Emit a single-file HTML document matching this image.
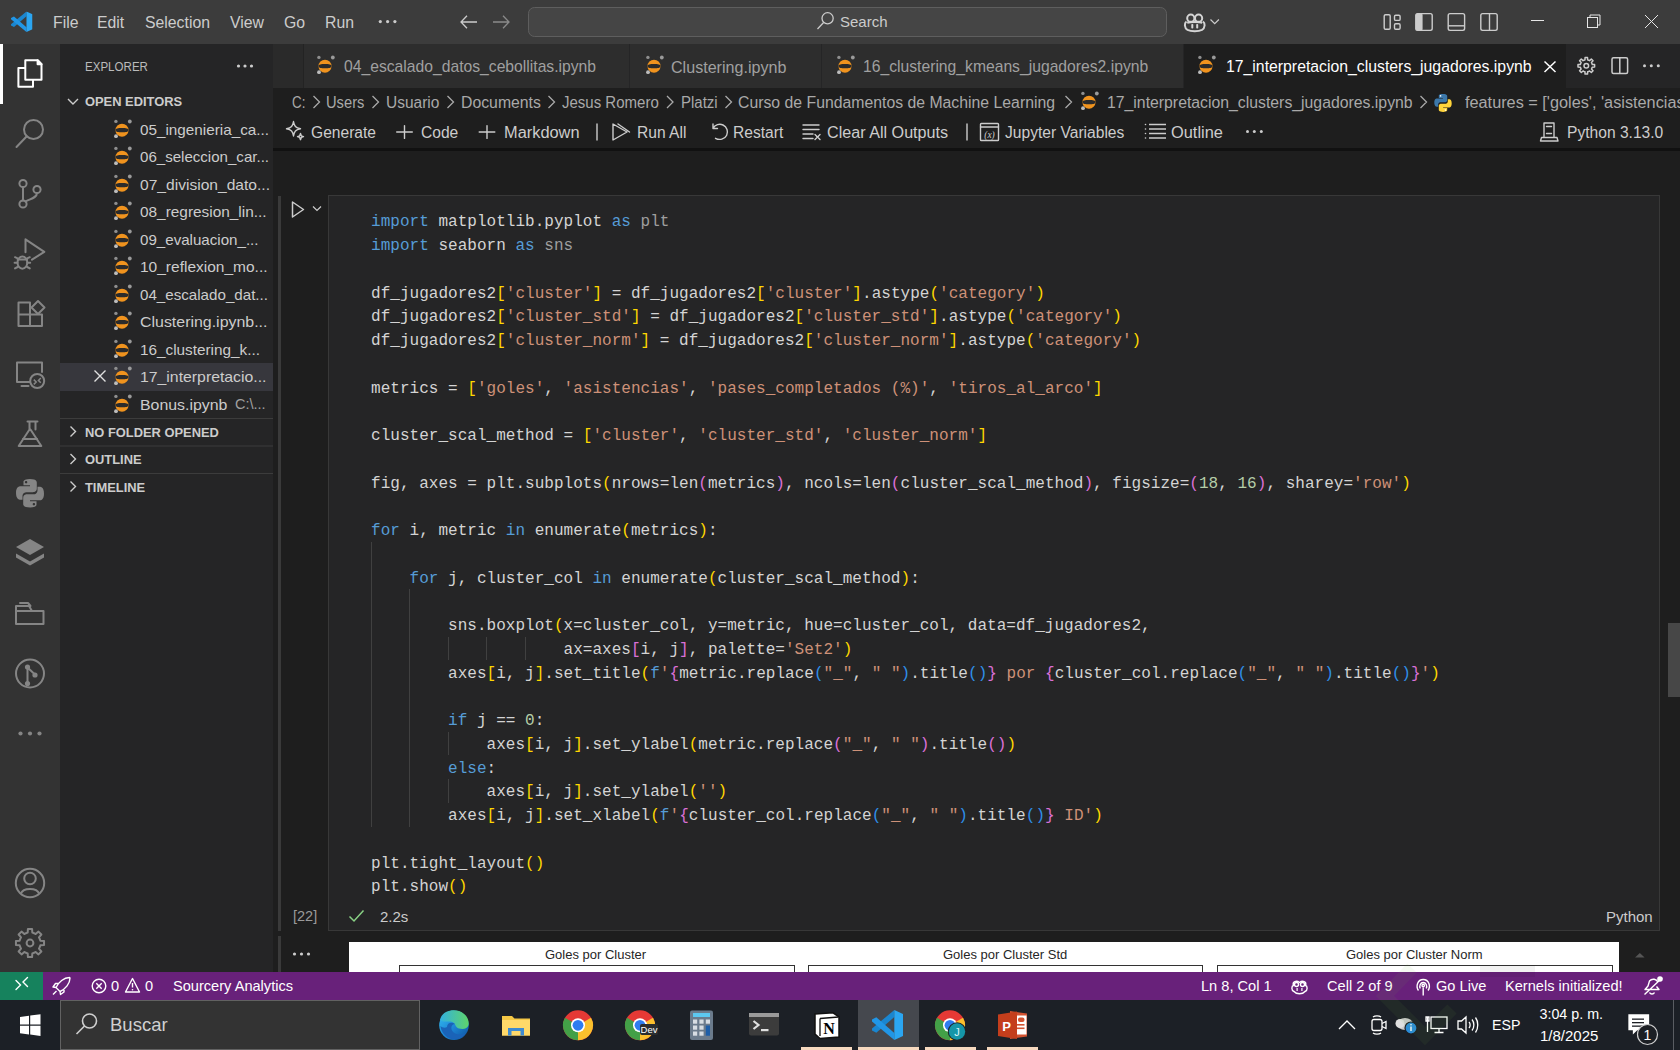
<!DOCTYPE html>
<html><head><meta charset="utf-8">
<style>
*{box-sizing:border-box;margin:0;padding:0}
html,body{width:1680px;height:1050px;overflow:hidden;background:#1e1e1e;font-family:"Liberation Sans",sans-serif;color:#ccc}
.a{position:absolute;white-space:pre}
#title{position:absolute;left:0;top:0;width:1680px;height:44px;background:#3c3c3c}
#act{position:absolute;left:0;top:44px;width:60px;height:928px;background:#333333}
#side{position:absolute;left:60px;top:44px;width:213px;height:928px;background:#252526}
#tabs{position:absolute;left:273px;top:44px;width:1407px;height:44px;background:#252526}
#crumb{position:absolute;left:273px;top:88px;width:1407px;height:28px;background:#1e1e1e}
#tool{position:absolute;left:273px;top:116px;width:1407px;height:32px;background:#1e1e1e}
#editor{position:absolute;left:273px;top:148px;width:1407px;height:824px;background:#1e1e1e}
#status{position:absolute;left:0;top:972px;width:1680px;height:28px;background:#68217a}
#task{position:absolute;left:0;top:1000px;width:1680px;height:50px;background:#1c2026}
.g{position:absolute;width:1px;background:#404040}
.ln{height:23.75px;white-space:pre}
.mt{top:14px;font-size:15.8px;color:#cccccc}
.sh{left:85px;font-weight:bold;font-size:12.9px;color:#cccccc}
.si{left:140px;font-size:15px;line-height:27.5px;color:#cccccc}
.tt{top:58px;font-size:15.7px;color:#a0a0a0}
.cb{top:94px;font-size:15.8px;color:#a9a9a9}
.tb{top:124px;font-size:15.6px;color:#cccccc}
.st{top:977.5px;font-size:14.6px;color:#ffffff}
.pt{top:5px;font-size:13px;color:#262626}
.code{font-family:"Liberation Mono",monospace;font-size:16px;line-height:23.75px;letter-spacing:0.024px}
</style></head><body>
<div id="title">
<svg class="a" style="left:0;top:0" width="1680" height="44">
 <svg x="11" y="11.5" width="21.5" height="20.5" viewBox="0 0 100 100" preserveAspectRatio="none"><use href="#vsc"/></svg>
 <g stroke="#cccccc" stroke-width="1.3" fill="none">
  <path d="M477 22 H461 M467 15.8 L461 22 L467 28.2"/>
 </g>
 <g fill="#cccccc"><circle cx="380.3" cy="21.6" r="1.6"/><circle cx="387.6" cy="21.6" r="1.6"/><circle cx="394.9" cy="21.6" r="1.6"/></g>
 <g stroke="#8a8a8a" stroke-width="1.3" fill="none">
  <path d="M493 22 H509 M503 15.8 L509 22 L503 28.2"/>
 </g>
 <rect x="528.5" y="7.5" width="638" height="29" rx="6" fill="#454545" stroke="#5e5e5e" stroke-width="1"/>
 <g stroke="#cccccc" stroke-width="1.3" fill="none">
  <circle cx="827.6" cy="18.3" r="5.6"/><path d="M823.6 22.5 L817.5 29"/>
 </g>
 <g stroke="#d4d4d4" stroke-width="2" fill="none">
  <circle cx="1190.8" cy="18.2" r="3.6"/><circle cx="1198.6" cy="18.2" r="3.6"/>
  <path d="M1186.5 21.5 C1184.2 23 1184.2 28 1187.5 29.8 C1191 31.6 1198.5 31.6 1202 29.8 C1205.3 28 1205.3 23 1203 21.5"/>
  <path d="M1187.2 22.8 C1190 21.8 1199.5 21.8 1202.3 22.8"/>
 </g>
 <g fill="#d4d4d4"><rect x="1191.3" y="24" width="2" height="4.6" rx="0.8"/><rect x="1196.2" y="24" width="2" height="4.6" rx="0.8"/></g>
 <path d="M1210.5 19.5 L1214.7 23.7 L1218.9 19.5" stroke="#cccccc" stroke-width="1.2" fill="none"/>
 <g stroke="#cccccc" stroke-width="1.4" fill="none">
  <rect x="1384.2" y="14.8" width="6" height="14.4" rx="1.3"/>
  <rect x="1394.5" y="15.2" width="5.6" height="5.2" rx="1.2"/>
  <rect x="1394.5" y="23.8" width="5.6" height="5.4" rx="1.2"/>
  <rect x="1415.8" y="13.6" width="16.4" height="16.8" rx="1.8"/>
  <rect x="1448.2" y="13.6" width="16.4" height="16.8" rx="1.8"/><path d="M1448.2 25.8 H1464.6"/>
  <rect x="1480.8" y="13.6" width="16.4" height="16.8" rx="1.8"/><path d="M1489.5 13.6 V30.4"/>
 </g>
 <rect x="1415.8" y="13.6" width="6.8" height="16.8" rx="1.5" fill="#cccccc"/>
 <g stroke="#e6e6e6" stroke-width="1" fill="none">
  <path d="M1531 20.5 H1544"/>
  <rect x="1587.5" y="17.5" width="10" height="10"/><path d="M1590 17.5 V15 H1600 V25 H1597.5"/>
  <path d="M1645 15 L1658 28 M1658 15 L1645 28"/>
 </g>
</svg>
<div class="a mt" style="left:53px">File</div>
<div class="a mt" style="left:97px">Edit</div>
<div class="a mt" style="left:145px">Selection</div>
<div class="a mt" style="left:230px">View</div>
<div class="a mt" style="left:284px">Go</div>
<div class="a mt" style="left:325px">Run</div>

<div class="a" style="left:840px;top:13px;font-size:15px;color:#cccccc">Search</div>
</div>

<div id="act"></div>
<div class="a" style="left:0;top:44px;width:2.5px;height:60px;background:#ffffff"></div>
<svg class="a" style="left:0;top:0" width="60" height="972">
 <g stroke="#ffffff" stroke-width="2" fill="none" stroke-linejoin="round">
  <path d="M25.3 60.3 H37.6 L41.5 64.2 V79.8 H25.3 Z"/>
  <path d="M25.3 68.1 H18.4 V86.8 H33 V79.8"/>
  <path d="M37.6 60.3 V64.2 H41.5 Z" fill="#ffffff"/>
 </g>
 <g stroke="#858585" stroke-width="2" fill="none" stroke-linejoin="round" stroke-linecap="round">
  <circle cx="33.5" cy="129.5" r="9.5"/><path d="M26.8 136.3 L16.5 147"/>
  <circle cx="23" cy="183.5" r="3.6"/><circle cx="23" cy="204" r="3.6"/><circle cx="37" cy="189.5" r="3.6"/>
  <path d="M23 187.1 V200.4 M37 193.1 C37 198 30 199 25.5 201.5"/>
  <path d="M25.5 252.3 V239.3 L44.3 251.9 L32 259.6"/>
  <ellipse cx="22.4" cy="262.6" rx="4.9" ry="6.1"/><path d="M17.6 259.6 H27.2 M15 257.2 L17.6 258.3 M29.8 257.2 L27.2 258.3 M14.6 262.8 H17.5 M30.2 262.8 H27.3 M15 268.4 L17.6 267 M29.8 268.4 L27.2 267"/>
  <path d="M18.5 302.5 H30 V326 H18.5 Z M18.5 314.5 H42 V326 H30"/>
  <path d="M38 301 L44.5 307.5 L38 314 L31.5 307.5 Z"/>
  <path d="M29.5 382 H17 V362.5 H42 V372"/><path d="M21.5 386 H28.5"/>
  <circle cx="37.2" cy="381" r="7"/>
 </g>
 <g stroke="#858585" stroke-width="1.5" fill="none"><path d="M33.8 379.6 L36.2 382 L33.8 384.4 M40.8 378 L38.4 380.4 L40.8 382.8"/></g>
 <g stroke="#858585" stroke-width="2" fill="none" stroke-linejoin="round" stroke-linecap="round">
  <path d="M27.5 421.5 H37.5 M29.5 421.5 V429.5 L18.7 446 H41.3 L30.5 429.5 M35.5 421.5 V429.5"/>
  <path d="M23 439 H37"/>
 </g>
 <g fill="#858585">
  <path d="M29.8 479 C23 479 23.5 482 23.5 482 V485.2 H30 V486.2 H20.5 C20.5 486.2 16 485.7 16 492.8 C16 500 20 499.7 20 499.7 H22.5 V496.3 C22.5 496.3 22.4 492.2 26.4 492.2 H33.1 C33.1 492.2 36.8 492.3 36.8 488.6 V482.5 C36.8 482.5 37.4 479 29.8 479 Z M26.1 481 C26.8 481 27.3 481.5 27.3 482.2 C27.3 482.9 26.8 483.4 26.1 483.4 C25.4 483.4 24.9 482.9 24.9 482.2 C24.9 481.5 25.4 481 26.1 481 Z"/>
  <path d="M30.2 507.5 C37 507.5 36.5 504.5 36.5 504.5 V501.3 H30 V500.3 H39.5 C39.5 500.3 44 500.8 44 493.7 C44 486.5 40 486.8 40 486.8 H37.5 V490.2 C37.5 490.2 37.6 494.3 33.6 494.3 H26.9 C26.9 494.3 23.2 494.2 23.2 497.9 V504 C23.2 504 22.6 507.5 30.2 507.5 Z M33.9 505.5 C33.2 505.5 32.7 505 32.7 504.3 C32.7 503.6 33.2 503.1 33.9 503.1 C34.6 503.1 35.1 503.6 35.1 504.3 C35.1 505 34.6 505.5 33.9 505.5 Z"/>
  <path d="M30 539 L44 547 L30 555 L16 547 Z"/>
  <path d="M16 553.5 L30 561.5 L44 553.5 V557.5 L30 565.5 L16 557.5 Z"/>
  <circle cx="20.5" cy="733.5" r="2.1"/><circle cx="30" cy="733.5" r="2.1"/><circle cx="39.5" cy="733.5" r="2.1"/>
 </g>
 <g stroke="#858585" stroke-width="2" fill="none" stroke-linejoin="round" stroke-linecap="round">
  <path d="M16 606 V624 H43.5 V611 H32 L29 606 Z M16 611 H32"/><path d="M20 603 H28 L30.5 606"/>
  <circle cx="30" cy="673.5" r="14"/>
  <path d="M27.5 667 V683.5 M27.5 667.5 L35 674.5"/>
 </g>
 <g fill="#858585"><circle cx="27.5" cy="667" r="2.6"/><circle cx="35" cy="675" r="2.6"/><circle cx="27.5" cy="683.5" r="2.6"/></g>
 <g stroke="#858585" stroke-width="2" fill="none">
  <circle cx="30" cy="883" r="14.2"/><circle cx="30" cy="878.5" r="5.8"/><path d="M21 893.5 C23 887.5 37 887.5 39 893.5"/>
 </g>
 <g stroke="#858585" stroke-width="2" fill="none" stroke-linejoin="round">
  <path d="M39.79 938.94 L40.34 940.65 L44.05 940.94 L44.05 945.06 L40.34 945.35 L39.79 947.06 L38.97 948.64 L41.39 951.48 L38.48 954.39 L35.64 951.97 L34.06 952.79 L32.35 953.34 L32.06 957.05 L27.94 957.05 L27.65 953.34 L25.94 952.79 L24.36 951.97 L21.52 954.39 L18.61 951.48 L21.03 948.64 L20.21 947.06 L19.66 945.35 L15.95 945.06 L15.95 940.94 L19.66 940.65 L20.21 938.94 L21.03 937.36 L18.61 934.52 L21.52 931.61 L24.36 934.03 L25.94 933.21 L27.65 932.66 L27.94 928.95 L32.06 928.95 L32.35 932.66 L34.06 933.21 L35.64 934.03 L38.48 931.61 L41.39 934.52 L38.97 937.36 Z"/>
  <circle cx="30" cy="943" r="3.4"/>
 </g>
</svg>
<div id="side"></div>
<svg width="0" height="0" style="position:absolute"><defs>
<symbol id="vsc" viewBox="0 0 100 100">
 <path d="M72 0 L72 23 L14 76 L0 68 L0 62 Z" fill="#1a86d0"/>
 <path d="M72 100 L72 77 L14 24 L0 32 L0 38 Z" fill="#2196e6"/>
 <path d="M72 0 L100 13 V87 L72 100 Z" fill="#2ba6f2"/>
</symbol>
<symbol id="jup" viewBox="0 0 24 28">
 <ellipse cx="12" cy="14.2" rx="6.5" ry="6.5" fill="#f0931e"/>
 <path d="M5.5 14.2 C5.5 12.6 8 12.1 12 12.1 C16 12.1 18.5 12.6 18.5 14.2 C18.5 15.8 16 16.3 12 16.3 C8 16.3 5.5 15.8 5.5 14.2 Z" fill="#2b2b2b"/>
 <circle cx="5.9" cy="5.4" r="1.7" fill="#8f8f8f"/>
 <circle cx="19.8" cy="5.5" r="1.9" fill="#9a9a9a"/>
 <circle cx="6" cy="20.2" r="1.9" fill="#bdbdbd"/>
</symbol></defs></svg>
<div class="a" style="left:85px;top:58.5px;font-size:13.6px;color:#bbbbbb;transform:scaleX(0.85);transform-origin:0 0">EXPLORER</div>
<svg class="a" style="left:230px;top:55px" width="30" height="22"><g fill="#cccccc"><circle cx="8.5" cy="11" r="1.6"/><circle cx="15" cy="11" r="1.6"/><circle cx="21.5" cy="11" r="1.6"/></g></svg>
<svg class="a" style="left:60px;top:88px" width="213" height="412"><g stroke="#cccccc" stroke-width="1.4" fill="none">
 <path d="M8 11 L13 16 L18 11"/>
 <path d="M10.5 338.5 L15.5 343.5 L10.5 348.5"/>
 <path d="M10.5 366 L15.5 371 L10.5 376"/>
 <path d="M10.5 393.5 L15.5 398.5 L10.5 403.5"/>
</g>
<g fill="#3c3c3c"><rect x="0" y="330" width="213" height="1"/><rect x="0" y="357.5" width="213" height="1"/><rect x="0" y="385" width="213" height="1"/></g>
</svg>
<div class="a sh" style="top:94.3px">OPEN EDITORS</div>
<div class="a sh" style="top:424.8px">NO FOLDER OPENED</div>
<div class="a sh" style="top:452.3px">OUTLINE</div>
<div class="a sh" style="top:479.8px">TIMELINE</div>
<svg class="a" style="left:110px;top:115.5px" width="24" height="28"><use href="#jup"/></svg>
<div class="a si" style="top:115.5px;transform:scaleX(1.0174);transform-origin:0 0">05_ingenieria_ca...</div>
<svg class="a" style="left:110px;top:143.0px" width="24" height="28"><use href="#jup"/></svg>
<div class="a si" style="top:143.0px;transform:scaleX(1.0047);transform-origin:0 0">06_seleccion_car...</div>
<svg class="a" style="left:110px;top:170.5px" width="24" height="28"><use href="#jup"/></svg>
<div class="a si" style="top:170.5px;transform:scaleX(1.0392);transform-origin:0 0">07_division_dato...</div>
<svg class="a" style="left:110px;top:198.0px" width="24" height="28"><use href="#jup"/></svg>
<div class="a si" style="top:198.0px;transform:scaleX(1.0251);transform-origin:0 0">08_regresion_lin...</div>
<svg class="a" style="left:110px;top:225.5px" width="24" height="28"><use href="#jup"/></svg>
<div class="a si" style="top:225.5px;transform:scaleX(1.0077);transform-origin:0 0">09_evaluacion_...</div>
<svg class="a" style="left:110px;top:253.0px" width="24" height="28"><use href="#jup"/></svg>
<div class="a si" style="top:253.0px;transform:scaleX(1.0332);transform-origin:0 0">10_reflexion_mo...</div>
<svg class="a" style="left:110px;top:280.5px" width="24" height="28"><use href="#jup"/></svg>
<div class="a si" style="top:280.5px;transform:scaleX(1.0095);transform-origin:0 0">04_escalado_dat...</div>
<svg class="a" style="left:110px;top:308.0px" width="24" height="28"><use href="#jup"/></svg>
<div class="a si" style="top:308.0px;transform:scaleX(1.0616);transform-origin:0 0">Clustering.ipynb...</div>
<svg class="a" style="left:110px;top:335.5px" width="24" height="28"><use href="#jup"/></svg>
<div class="a si" style="top:335.5px;transform:scaleX(1.0204);transform-origin:0 0">16_clustering_k...</div>
<div class="a" style="left:60px;top:363.0px;width:213px;height:27.5px;background:#37373d"></div>
<svg class="a" style="left:90px;top:363.0px" width="20" height="28"><path d="M4.5 7.5 L15.5 18.5 M15.5 7.5 L4.5 18.5" stroke="#e0e0e0" stroke-width="1.4"/></svg>
<svg class="a" style="left:110px;top:363.0px" width="24" height="28"><use href="#jup"/></svg>
<div class="a si" style="top:363.0px;transform:scaleX(1.0533);transform-origin:0 0">17_interpretacio...</div>
<svg class="a" style="left:110px;top:390.5px" width="24" height="28"><use href="#jup"/></svg>
<div class="a si" style="top:390.5px;transform:scaleX(1.0593);transform-origin:0 0">Bonus.ipynb</div>
<div class="a" style="left:235px;top:390.5px;font-size:14.5px;line-height:27.5px;color:#a0a0a0">C:\...</div>
<div id="tabs"></div>
<div class="a" style="left:273px;top:44px;width:30px;height:44px;background:#2a2a2a"></div>
<div class="a" style="left:303px;top:44px;width:327px;height:44px;background:#2d2d2d;border-left:1px solid #232323;border-right:1px solid #252526"></div>
<div class="a" style="left:630px;top:44px;width:192px;height:44px;background:#2d2d2d;border-right:1px solid #252526"></div>
<div class="a" style="left:822px;top:44px;width:362px;height:44px;background:#2d2d2d;border-right:1px solid #252526"></div>
<div class="a" style="left:1184px;top:44px;width:382px;height:44px;background:#1e1e1e"></div>
<svg class="a" style="left:313px;top:52px" width="24" height="28"><use href="#jup"/></svg>
<svg class="a" style="left:642px;top:52px" width="24" height="28"><use href="#jup"/></svg>
<svg class="a" style="left:833px;top:52px" width="24" height="28"><use href="#jup"/></svg>
<svg class="a" style="left:1194px;top:52px" width="24" height="28"><use href="#jup"/></svg>
<div class="a tt" style="left:344px">04_escalado_datos_cebollitas.ipynb</div>
<div class="a tt" style="left:671px;font-size:16.1px">Clustering.ipynb</div>
<div class="a tt" style="left:863px">16_clustering_kmeans_jugadores2.ipynb</div>
<div class="a tt" style="left:1226px;color:#ffffff;font-size:15.8px">17_interpretacion_clusters_jugadores.ipynb</div>
<svg class="a" style="left:1520px;top:44px" width="160" height="44">
 <path d="M24.5 17.5 L35.5 28 M35.5 17.5 L24.5 28" stroke="#ffffff" stroke-width="1.5"/>
 <g stroke="#cccccc" stroke-width="1.5" fill="none" stroke-linejoin="round">
  <path d="M71.94 19.47 L72.25 20.45 L74.61 20.58 L74.61 23.02 L72.25 23.15 L71.94 24.13 L71.46 25.05 L73.04 26.82 L71.32 28.54 L69.55 26.96 L68.63 27.44 L67.65 27.75 L67.52 30.11 L65.08 30.11 L64.95 27.75 L63.97 27.44 L63.05 26.96 L61.28 28.54 L59.56 26.82 L61.14 25.05 L60.66 24.13 L60.35 23.15 L57.99 23.02 L57.99 20.58 L60.35 20.45 L60.66 19.47 L61.14 18.55 L59.56 16.78 L61.28 15.06 L63.05 16.64 L63.97 16.16 L64.95 15.85 L65.08 13.49 L67.52 13.49 L67.65 15.85 L68.63 16.16 L69.55 16.64 L71.32 15.06 L73.04 16.78 L71.46 18.55 Z"/>
  <circle cx="66.3" cy="21.8" r="2.3"/>
  <rect x="92" y="13.8" width="15.6" height="15.6" rx="1.5"/><path d="M99.8 13.8 V29.4"/>
 </g>
 <g fill="#cccccc"><circle cx="124.5" cy="21.8" r="1.5"/><circle cx="131.3" cy="21.8" r="1.5"/><circle cx="138.3" cy="21.8" r="1.5"/></g>
</svg>

<div id="crumb"></div>
<div class="a cb" style="left:292px;transform:scaleX(0.85);transform-origin:0 0">C:</div>
<div class="a cb" style="left:326px;transform:scaleX(0.93);transform-origin:0 0">Users</div>
<div class="a cb" style="left:386px;transform:scaleX(0.98);transform-origin:0 0">Usuario</div>
<div class="a cb" style="left:461px">Documents</div>
<div class="a cb" style="left:562px;transform:scaleX(0.95);transform-origin:0 0">Jesus Romero</div>
<div class="a cb" style="left:681px;transform:scaleX(0.95);transform-origin:0 0">Platzi</div>
<div class="a cb" style="left:738px">Curso de Fundamentos de Machine Learning</div>
<div class="a cb" style="left:1107px">17_interpretacion_clusters_jugadores.ipynb</div>
<div class="a cb" style="left:1465px;transform:scaleX(1.03);transform-origin:0 0">features = ['goles', 'asistencias</div>
<svg class="a" style="left:273px;top:88px" width="1407" height="28">
 <g stroke="#a9a9a9" stroke-width="1.3" fill="none">
  <path d="M40.5 8 L46.5 14 L40.5 20 M99.5 8 L105.5 14 L99.5 20 M174.5 8 L180.5 14 L174.5 20 M275.5 8 L281.5 14 L275.5 20 M394.0 8 L400.0 14 L394.0 20 M452.5 8 L458.5 14 L452.5 20 M792.5 8 L798.5 14 L792.5 20 M1147.5 8 L1153.5 14 L1147.5 20"/>
 </g>
</svg>
<svg class="a" style="left:1077px;top:88px" width="24" height="28"><use href="#jup"/></svg>
<svg class="a" style="left:1433px;top:93px" width="20" height="20" viewBox="0 0 20 20">
 <path d="M9.8 1 C5.5 1 5.8 2.9 5.8 2.9 V4.9 H9.9 V5.5 H4.1 C4.1 5.5 1.3 5.2 1.3 9.6 C1.3 14 3.8 13.8 3.8 13.8 H5.2 V11.8 C5.2 11.8 5.1 9.3 7.7 9.3 H11.8 C11.8 9.3 14.2 9.3 14.2 7 V3.2 C14.2 3.2 14.6 1 9.8 1 Z" fill="#3c78aa"/>
 <path d="M10.2 19 C14.5 19 14.2 17.1 14.2 17.1 V15.1 H10.1 V14.5 H15.9 C15.9 14.5 18.7 14.8 18.7 10.4 C18.7 6 16.2 6.2 16.2 6.2 H14.8 V8.2 C14.8 8.2 14.9 10.7 12.3 10.7 H8.2 C8.2 10.7 5.8 10.7 5.8 13 V16.8 C5.8 16.8 5.4 19 10.2 19 Z" fill="#ffd43b"/>
 <circle cx="7.6" cy="2.9" r="0.8" fill="#fff"/><circle cx="12.4" cy="17.1" r="0.8" fill="#fff"/>
</svg>

<div id="tool"></div>
<div class="a tb" style="left:311px">Generate</div>
<div class="a tb" style="left:421px">Code</div>
<div class="a tb" style="left:504px;transform:scaleX(1.05);transform-origin:0 0">Markdown</div>
<div class="a tb" style="left:637px">Run All</div>
<div class="a tb" style="left:733px">Restart</div>
<div class="a tb" style="left:827px;transform:scaleX(1.035);transform-origin:0 0">Clear All Outputs</div>
<div class="a tb" style="left:1005px">Jupyter Variables</div>
<div class="a tb" style="left:1171px;transform:scaleX(1.05);transform-origin:0 0">Outline</div>
<div class="a tb" style="left:1567px">Python 3.13.0</div>
<svg class="a" style="left:273px;top:116px" width="1407" height="32">
 <g stroke="#cccccc" stroke-width="1.4" fill="none" stroke-linejoin="round" stroke-linecap="round">
  <path transform="translate(2 -0.5)" d="M18.5 6 C19.3 10.5 20.5 12.3 25.5 13.3 C20.5 14.3 19.3 16 18.5 20.5 C17.7 16 16.5 14.3 11.5 13.3 C16.5 12.3 17.7 10.5 18.5 6 Z"/>
  <path transform="translate(1.5 -1)" d="M26 18.5 L26.8 20.8 L29 21.6 L26.8 22.4 L26 24.7 L25.2 22.4 L23 21.6 L25.2 20.8 Z"/>
  <path d="M131.5 9.6 V22.4 M123.7 16 H139.3"/>
  <path d="M214 9.6 V22.4 M206.2 16 H221.8"/>
  <path d="M324 8 V24"/>
  <path d="M340 8 L354 16 L340 24 Z M345 8 L356.5 16"/>
  <path d="M440 12.5 C442 8.5 446.5 7.5 450 9 C454 10.8 455.5 15.5 453.7 19.3 C451.8 23.3 446.5 24.5 442.5 22.3 M440 8 V12.5 H444.5"/>
  <path d="M530 9 H546 M530 13.5 H546 M530 18 H540 M530 22.5 H540 M542 18.5 L547 23.5 M547 18.5 L542 23.5"/>
  <path d="M694 8 V24"/>
  <rect x="707.5" y="7.5" width="18" height="17" rx="0.8"/><path d="M707.5 11 H725.5"/>
  <path d="M876 8.5 H893 M876 13 H893 M876 17.5 H893 M876 22 H893" stroke-linecap="butt"/>
  <path d="M1271 7 H1281 V21.5 H1271 Z M1273.5 10.5 H1278.5 M1273.5 17.5 H1278.5 M1268.5 21.5 H1284 L1285 25 H1267.5 Z"/>
 </g>
 <g fill="#cccccc">
  <circle cx="872.5" cy="8.5" r="0.8"/><circle cx="872.5" cy="13" r="0.8"/><circle cx="872.5" cy="17.5" r="0.8"/><circle cx="872.5" cy="22" r="0.8"/>
  <circle cx="974.5" cy="15.5" r="1.5"/><circle cx="981.3" cy="15.5" r="1.5"/><circle cx="988.3" cy="15.5" r="1.5"/>
 </g>
 <text x="716.5" y="21.5" font-size="9.5" font-style="italic" fill="#cccccc" text-anchor="middle" font-family="Liberation Serif">(x)</text>
</svg>

<div id="editor"></div>
<div class="a" style="left:273px;top:147.5px;width:1407px;height:3.5px;background:#111111"></div>
<div id="cellbar" style="position:absolute;left:278px;top:196px;width:3px;height:735px;background:#3a3a3a"></div>
<div id="cell" style="position:absolute;left:328px;top:195px;width:1332px;height:736px;background:#252526;border:1px solid #383838"></div>
<div class="g" style="left:371px;top:541.6px;height:285px"></div>
<div class="g" style="left:409.4px;top:589.1px;height:237.5px"></div>
<div class="g" style="left:448px;top:636.6px;height:23.75px"></div>
<div class="g" style="left:486.4px;top:636.6px;height:23.75px"></div>
<div class="g" style="left:524.8px;top:636.6px;height:23.75px"></div>
<div class="g" style="left:448px;top:731.6px;height:23.75px"></div>
<div class="g" style="left:448px;top:779.1px;height:23.75px"></div>
<div class="code" style="position:absolute;left:371px;top:211.3px"><div class="ln"><span style="color:#569cd6">import</span><span style="color:#d4d4d4"> matplotlib.pyplot </span><span style="color:#569cd6">as</span><span style="color:#9e9e9e"> plt</span></div>
<div class="ln"><span style="color:#569cd6">import</span><span style="color:#d4d4d4"> seaborn </span><span style="color:#569cd6">as</span><span style="color:#9e9e9e"> sns</span></div>
<div class="ln"></div>
<div class="ln"><span style="color:#d4d4d4">df_jugadores2</span><span style="color:#ffd700">[</span><span style="color:#ce9178">'cluster'</span><span style="color:#ffd700">]</span><span style="color:#d4d4d4"> = df_jugadores2</span><span style="color:#ffd700">[</span><span style="color:#ce9178">'cluster'</span><span style="color:#ffd700">]</span><span style="color:#d4d4d4">.astype</span><span style="color:#ffd700">(</span><span style="color:#ce9178">'category'</span><span style="color:#ffd700">)</span></div>
<div class="ln"><span style="color:#d4d4d4">df_jugadores2</span><span style="color:#ffd700">[</span><span style="color:#ce9178">'cluster_std'</span><span style="color:#ffd700">]</span><span style="color:#d4d4d4"> = df_jugadores2</span><span style="color:#ffd700">[</span><span style="color:#ce9178">'cluster_std'</span><span style="color:#ffd700">]</span><span style="color:#d4d4d4">.astype</span><span style="color:#ffd700">(</span><span style="color:#ce9178">'category'</span><span style="color:#ffd700">)</span></div>
<div class="ln"><span style="color:#d4d4d4">df_jugadores2</span><span style="color:#ffd700">[</span><span style="color:#ce9178">'cluster_norm'</span><span style="color:#ffd700">]</span><span style="color:#d4d4d4"> = df_jugadores2</span><span style="color:#ffd700">[</span><span style="color:#ce9178">'cluster_norm'</span><span style="color:#ffd700">]</span><span style="color:#d4d4d4">.astype</span><span style="color:#ffd700">(</span><span style="color:#ce9178">'category'</span><span style="color:#ffd700">)</span></div>
<div class="ln"></div>
<div class="ln"><span style="color:#d4d4d4">metrics = </span><span style="color:#ffd700">[</span><span style="color:#ce9178">'goles'</span><span style="color:#d4d4d4">, </span><span style="color:#ce9178">'asistencias'</span><span style="color:#d4d4d4">, </span><span style="color:#ce9178">'pases_completados (%)'</span><span style="color:#d4d4d4">, </span><span style="color:#ce9178">'tiros_al_arco'</span><span style="color:#ffd700">]</span></div>
<div class="ln"></div>
<div class="ln"><span style="color:#d4d4d4">cluster_scal_method = </span><span style="color:#ffd700">[</span><span style="color:#ce9178">'cluster'</span><span style="color:#d4d4d4">, </span><span style="color:#ce9178">'cluster_std'</span><span style="color:#d4d4d4">, </span><span style="color:#ce9178">'cluster_norm'</span><span style="color:#ffd700">]</span></div>
<div class="ln"></div>
<div class="ln"><span style="color:#d4d4d4">fig, axes = plt.subplots</span><span style="color:#ffd700">(</span><span style="color:#d4d4d4">nrows=len</span><span style="color:#da70d6">(</span><span style="color:#d4d4d4">metrics</span><span style="color:#da70d6">)</span><span style="color:#d4d4d4">, ncols=len</span><span style="color:#da70d6">(</span><span style="color:#d4d4d4">cluster_scal_method</span><span style="color:#da70d6">)</span><span style="color:#d4d4d4">, figsize=</span><span style="color:#da70d6">(</span><span style="color:#b5cea8">18</span><span style="color:#d4d4d4">, </span><span style="color:#b5cea8">16</span><span style="color:#da70d6">)</span><span style="color:#d4d4d4">, sharey=</span><span style="color:#ce9178">'row'</span><span style="color:#ffd700">)</span></div>
<div class="ln"></div>
<div class="ln"><span style="color:#569cd6">for</span><span style="color:#d4d4d4"> i, metric </span><span style="color:#569cd6">in</span><span style="color:#d4d4d4"> enumerate</span><span style="color:#ffd700">(</span><span style="color:#d4d4d4">metrics</span><span style="color:#ffd700">)</span><span style="color:#d4d4d4">:</span></div>
<div class="ln"></div>
<div class="ln"><span style="color:#d4d4d4">    </span><span style="color:#569cd6">for</span><span style="color:#d4d4d4"> j, cluster_col </span><span style="color:#569cd6">in</span><span style="color:#d4d4d4"> enumerate</span><span style="color:#ffd700">(</span><span style="color:#d4d4d4">cluster_scal_method</span><span style="color:#ffd700">)</span><span style="color:#d4d4d4">:</span></div>
<div class="ln"></div>
<div class="ln"><span style="color:#d4d4d4">        sns.boxplot</span><span style="color:#ffd700">(</span><span style="color:#d4d4d4">x=cluster_col, y=metric, hue=cluster_col, data=df_jugadores2,</span></div>
<div class="ln"><span style="color:#d4d4d4">                    ax=axes</span><span style="color:#da70d6">[</span><span style="color:#d4d4d4">i, j</span><span style="color:#da70d6">]</span><span style="color:#d4d4d4">, palette=</span><span style="color:#ce9178">'Set2'</span><span style="color:#ffd700">)</span></div>
<div class="ln"><span style="color:#d4d4d4">        axes</span><span style="color:#ffd700">[</span><span style="color:#d4d4d4">i, j</span><span style="color:#ffd700">]</span><span style="color:#d4d4d4">.set_title</span><span style="color:#ffd700">(</span><span style="color:#569cd6">f</span><span style="color:#ce9178">'</span><span style="color:#da70d6">{</span><span style="color:#d4d4d4">metric.replace</span><span style="color:#2f8fe8">(</span><span style="color:#ce9178">"_"</span><span style="color:#d4d4d4">, </span><span style="color:#ce9178">" "</span><span style="color:#2f8fe8">)</span><span style="color:#d4d4d4">.title</span><span style="color:#2f8fe8">()</span><span style="color:#da70d6">}</span><span style="color:#ce9178"> por </span><span style="color:#da70d6">{</span><span style="color:#d4d4d4">cluster_col.replace</span><span style="color:#2f8fe8">(</span><span style="color:#ce9178">"_"</span><span style="color:#d4d4d4">, </span><span style="color:#ce9178">" "</span><span style="color:#2f8fe8">)</span><span style="color:#d4d4d4">.title</span><span style="color:#2f8fe8">()</span><span style="color:#da70d6">}</span><span style="color:#ce9178">'</span><span style="color:#ffd700">)</span></div>
<div class="ln"></div>
<div class="ln"><span style="color:#d4d4d4">        </span><span style="color:#569cd6">if</span><span style="color:#d4d4d4"> j == </span><span style="color:#b5cea8">0</span><span style="color:#d4d4d4">:</span></div>
<div class="ln"><span style="color:#d4d4d4">            axes</span><span style="color:#ffd700">[</span><span style="color:#d4d4d4">i, j</span><span style="color:#ffd700">]</span><span style="color:#d4d4d4">.set_ylabel</span><span style="color:#ffd700">(</span><span style="color:#d4d4d4">metric.replace</span><span style="color:#da70d6">(</span><span style="color:#ce9178">"_"</span><span style="color:#d4d4d4">, </span><span style="color:#ce9178">" "</span><span style="color:#da70d6">)</span><span style="color:#d4d4d4">.title</span><span style="color:#da70d6">()</span><span style="color:#ffd700">)</span></div>
<div class="ln"><span style="color:#d4d4d4">        </span><span style="color:#569cd6">else</span><span style="color:#d4d4d4">:</span></div>
<div class="ln"><span style="color:#d4d4d4">            axes</span><span style="color:#ffd700">[</span><span style="color:#d4d4d4">i, j</span><span style="color:#ffd700">]</span><span style="color:#d4d4d4">.set_ylabel</span><span style="color:#ffd700">(</span><span style="color:#ce9178">''</span><span style="color:#ffd700">)</span></div>
<div class="ln"><span style="color:#d4d4d4">        axes</span><span style="color:#ffd700">[</span><span style="color:#d4d4d4">i, j</span><span style="color:#ffd700">]</span><span style="color:#d4d4d4">.set_xlabel</span><span style="color:#ffd700">(</span><span style="color:#569cd6">f</span><span style="color:#ce9178">'</span><span style="color:#da70d6">{</span><span style="color:#d4d4d4">cluster_col.replace</span><span style="color:#2f8fe8">(</span><span style="color:#ce9178">"_"</span><span style="color:#d4d4d4">, </span><span style="color:#ce9178">" "</span><span style="color:#2f8fe8">)</span><span style="color:#d4d4d4">.title</span><span style="color:#2f8fe8">()</span><span style="color:#da70d6">}</span><span style="color:#ce9178"> ID</span><span style="color:#ce9178">'</span><span style="color:#ffd700">)</span></div>
<div class="ln"></div>
<div class="ln"><span style="color:#d4d4d4">plt.tight_layout</span><span style="color:#ffd700">()</span></div>
<div class="ln"><span style="color:#d4d4d4">plt.show</span><span style="color:#ffd700">()</span></div></div>
<svg class="a" style="left:273px;top:148px" width="1407" height="824">
 <path d="M19.5 54 L30.5 61.5 L19.5 69 Z" stroke="#cccccc" stroke-width="1.5" fill="none" stroke-linejoin="round"/>
 <path d="M40 58.5 L44 62.5 L48 58.5" stroke="#cccccc" stroke-width="1.2" fill="none"/>
 <path d="M76.5 768.5 L81 773 L90.5 762.5" stroke="#89d185" stroke-width="1.5" fill="none"/>
 <g fill="#cccccc"><circle cx="21.5" cy="806" r="1.6"/><circle cx="28.5" cy="806" r="1.6"/><circle cx="35.5" cy="806" r="1.6"/></g>
 <path d="M1362 809.5 L1366.8 805 L1371.6 809.5 Z" fill="#555555"/>
</svg>
<div class="a" style="left:293px;top:908px;font-size:14.5px;color:#9a9a9a">[22]</div>
<div class="a" style="left:380px;top:908px;font-size:15px;color:#cccccc">2.2s</div>
<div class="a" style="left:1606px;top:908px;font-size:15px;color:#cccccc">Python</div>
<div class="a" style="left:278px;top:936px;width:3px;height:36px;background:#3a3a3a"></div>
<div class="a" style="left:1668px;top:623px;width:12px;height:74px;background:#474747"></div>
<div class="a" style="left:349px;top:942px;width:1270px;height:30px;background:#ffffff;overflow:hidden">
 <div class="a pt" style="left:196px">Goles por Cluster</div>
 <div class="a pt" style="left:594px">Goles por Cluster Std</div>
 <div class="a pt" style="left:997px">Goles por Cluster Norm</div>
 <div class="a" style="left:50px;top:23px;width:396px;height:20px;border:1px solid #333"></div>
 <div class="a" style="left:459px;top:23px;width:395px;height:20px;border:1px solid #333"></div>
 <div class="a" style="left:868px;top:23px;width:396px;height:20px;border:1px solid #333"></div>
</div>
<div id="status"></div>
<div class="a" style="left:0;top:972px;width:43px;height:28px;background:#16825d"></div>
<svg class="a" style="left:0;top:972px" width="1680" height="28">
 <g stroke="#ffffff" stroke-width="1.4" fill="none" stroke-linecap="round">
  <path d="M16 8.5 L20.5 13 L16 17.5 M27.5 5.5 L23 10 L27.5 14.5"/>
 </g>
 <g stroke="#ffffff" stroke-width="1.4" fill="none" stroke-linejoin="round">
  <path d="M69.5 5.5 C64 5.5 58.5 10 56 15.5 L60 19.5 C65.5 17 70 11.5 70 6 Z M56 15.5 L53 15 L55.5 11.5 L59 11.5 M60 19.5 L60.5 22.5 L64 20 L64 16.5 M56.5 19 L53 22.5"/>
  <circle cx="99" cy="14" r="6.8"/><path d="M96.3 11.3 L101.7 16.7 M101.7 11.3 L96.3 16.7"/>
  <path d="M132.5 6.5 L139.5 20 H125.5 Z M132.5 11 V15.5"/>
 </g>
 <circle cx="132.5" cy="17.8" r="0.8" fill="#fff"/>
 <g stroke="#ffffff" stroke-width="1.4" fill="none" stroke-linejoin="round">
  <path d="M1294 19.5 C1291 18 1291.5 14 1293.5 13.5 C1292 9.5 1296.5 8 1299.5 10.5 C1302.5 8 1307 9.5 1305.5 13.5 C1307.5 14 1308 18 1305 19.5 C1302.5 22.5 1296.5 22.5 1294 19.5 Z"/>
  <circle cx="1296.5" cy="12.5" r="2"/><circle cx="1302.5" cy="12.5" r="2"/>
  <path d="M1423.2 23.5 V15.5 M1418.5 18.5 C1415.5 14.5 1417.5 7.5 1423.2 7.5 C1429 7.5 1431 14.5 1428 18.5 M1420.3 16.5 C1419 14 1420.5 10.5 1423.2 10.5 C1426 10.5 1427.5 14 1426.2 16.5"/>
  <circle cx="1423.2" cy="13.5" r="1.2"/>
  <path transform="translate(8 0)" d="M1650 10.5 C1649 7 1644 6 1641.5 9 L1640 14 L1637 17.5 H1651 L1648.5 14.5 M1641.5 20.5 C1642.5 22.5 1645.5 22.5 1646.5 20.5 M1636.5 22.5 L1654 6"/>
 </g>
 <g fill="#ffffff"><rect x="1296.5" y="16" width="1.2" height="3"/><rect x="1301.3" y="16" width="1.2" height="3"/><circle cx="1660" cy="7" r="2.8"/></g>
</svg>
<div class="a st" style="left:111px">0</div>
<div class="a st" style="left:145px">0</div>
<div class="a st" style="left:173px">Sourcery Analytics</div>
<div class="a st" style="left:1201px">Ln 8, Col 1</div>
<div class="a st" style="left:1327px">Cell 2 of 9</div>
<div class="a st" style="left:1436px">Go Live</div>
<div class="a st" style="left:1505px">Kernels initialized!</div>

<div id="task"></div>
<div class="a" style="left:60px;top:1000px;width:360px;height:50px;background:#333333;border:1px solid #626262"></div>
<div class="a" style="left:858px;top:1000px;width:61px;height:50px;background:#45484e"></div>
<svg class="a" style="left:0;top:1000px" width="1680" height="50">
 <defs>
  <linearGradient id="edg" x1="0" y1="0" x2="1" y2="1"><stop offset="0" stop-color="#35c1f1"/><stop offset="0.5" stop-color="#1e88d8"/><stop offset="1" stop-color="#0c4f9c"/></linearGradient>
  <linearGradient id="edg2" x1="0" y1="0" x2="1" y2="0"><stop offset="0" stop-color="#33b0e0"/><stop offset="1" stop-color="#5ed46a"/></linearGradient>
 </defs>
 <g fill="#ffffff">
  <path d="M20 17 L29 15.8 V24.5 H20 Z M30.2 15.6 L40.5 14.2 V24.5 H30.2 Z M20 25.7 H29 V34.4 L20 33.2 Z M30.2 25.7 H40.5 V36 L30.2 34.6 Z"/>
 </g>
 <g stroke="#cfcfcf" stroke-width="1.6" fill="none"><circle cx="89.5" cy="21" r="7"/><path d="M84.5 26 L76.5 34"/></g>
 <!-- edge -->
 <circle cx="454" cy="25.3" r="14.8" fill="url(#edg)"/>
 <path d="M440 20 C442 11 452 9 459 11 C466 13.5 469.5 19.5 468.5 25 C467.5 29 463 29.5 459 28.5 C455 27.5 456 23.5 452.5 22 C448 20.5 443.5 23 440 20 Z" fill="url(#edg2)"/>
 <path d="M447 27 C447 22.5 452 21.5 455 24 C452 24 450.5 27 452 30.5 C454 34.5 461 36 466 33 C463 38 455 41 449 38 C444 35.5 441 31 440.5 26 C442 27.5 445 28.5 447 27 Z" fill="#1a63b8"/>
 <!-- explorer -->
 <path d="M502 16 H512 L514.5 18.5 H530 V35.5 H502 Z" fill="#f5c846"/>
 <path d="M502 20 H530 V35.5 H502 Z" fill="#ffd96a"/>
 <path d="M508 35.5 V28 H524 V35.5 H520.5 V31 H511.5 V35.5 Z" fill="#3e8ad1"/>
 <!-- chrome -->
 <g id="chr">
  <circle cx="578" cy="25.3" r="15" fill="#e53935"/>
  <path d="M578 25.3 L591 17.8 A15 15 0 0 1 578 40.3 Z" fill="#fbc02d"/>
  <path d="M578 25.3 L578 40.3 A15 15 0 0 1 565 17.8 Z" fill="#43a047"/>
  <circle cx="578" cy="25.3" r="7" fill="#ffffff"/>
  <circle cx="578" cy="25.3" r="5.4" fill="#2f7cf0"/>
 </g>
 <use href="#chr" x="62"/>
 <rect x="640" y="24" width="18" height="11" rx="2" fill="#2a2d30"/>
 <text x="649" y="33" font-size="9.5" fill="#ffffff" text-anchor="middle" font-family="Liberation Sans">Dev</text>
 <!-- calculator -->
 <rect x="690" y="10.5" width="23" height="29.5" rx="2" fill="#6b7b8c"/>
 <rect x="693" y="13" width="17" height="4" fill="#5cc8f0"/>
 <g fill="#d7dde3"><rect x="693" y="19.5" width="4.2" height="4.2"/><rect x="699.4" y="19.5" width="4.2" height="4.2"/><rect x="705.8" y="19.5" width="4.2" height="4.2"/>
 <rect x="693" y="25.5" width="4.2" height="4.2"/><rect x="699.4" y="25.5" width="4.2" height="4.2"/>
 <rect x="693" y="31.5" width="4.2" height="4.2"/><rect x="699.4" y="31.5" width="4.2" height="4.2"/></g>
 <rect x="705.8" y="25.5" width="4.2" height="10.2" fill="#1f5fa8"/>
 <!-- terminal -->
 <rect x="749" y="13" width="30" height="22.5" rx="2" fill="#3c3c3c"/>
 <rect x="749" y="13" width="30" height="4" fill="#9a9a9a"/>
 <path d="M753.5 21 L758.5 25 L753.5 29" stroke="#e0e0e0" stroke-width="2.2" fill="none"/>
 <rect x="761" y="29" width="7.5" height="2.2" fill="#e0e0e0"/>
 <!-- notion -->
 <path d="M815 14 L833 12.8 L839 17 V37 L820 38.5 L815 34 Z" fill="#ffffff" stroke="#111" stroke-width="1.5"/>
 <path d="M820 18.5 V36 M820 18.5 L838.5 17" stroke="#111" stroke-width="1.3" fill="none"/>
 <text x="829" y="34" font-size="16" font-weight="bold" fill="#000" text-anchor="middle" font-family="Liberation Serif">N</text>
 <!-- vscode -->
 <svg x="872" y="10" width="31" height="30" viewBox="0 0 100 100" preserveAspectRatio="none"><use href="#vsc"/></svg>
 <!-- chrome J -->
 <use href="#chr" x="372"/>
 <circle cx="957" cy="31.5" r="9.3" fill="#1f2226"/>
 <circle cx="957" cy="31.5" r="8.2" fill="#1596a8"/>
 <text x="957" y="36" font-size="11" fill="#d8f3f6" text-anchor="middle" font-family="Liberation Sans">J</text>
 <!-- powerpoint -->
 <path d="M1010 11 L1027 13.5 V36.5 L1010 39 Z" fill="#d35230"/>
 <rect x="1014" y="15.5" width="12.5" height="19" fill="#ffffff"/>
 <g fill="#d35230"><rect x="1018" y="17.5" width="6.5" height="4.5" rx="2"/><rect x="1017" y="24" width="7.5" height="1.6"/><rect x="1017" y="27.5" width="7.5" height="1.6"/></g>
 <path d="M998 14.5 L1017 11.5 V39 L998 36 Z" fill="#c43e1c"/>
 <text x="1006.5" y="31" font-size="13" font-weight="bold" fill="#ffffff" text-anchor="middle" font-family="Liberation Sans">P</text>
 <!-- indicators -->
 <g fill="#f6d9bf"><rect x="801" y="47" width="51" height="3"/><rect x="858" y="47" width="61" height="3"/><rect x="925" y="47" width="51" height="3"/><rect x="987" y="47" width="51" height="3"/></g>
 <!-- tray -->
 <g stroke="#ffffff" stroke-width="1.3" fill="none">
  <path d="M1339 29 L1347 21 L1355 29"/>
  <rect x="1372" y="19.5" width="10" height="11" rx="2"/><path d="M1382 23.5 L1386 21.5 V28.5 L1382 26.5 M1373 17 C1375 15.5 1379 15.5 1381 17 M1373 33 C1375 34.5 1379 34.5 1381 33"/>
  <rect x="1431" y="17" width="16" height="11.5"/><path d="M1434.5 32.5 H1443.5 M1439 28.5 V32.5 M1427.5 17 V32 M1426 17 H1429 V21 H1426 Z"/>
  <path d="M1458 21 H1461.5 L1466 17 V33 L1461.5 29 H1458 Z M1469 22 C1470.5 23.5 1470.5 26.5 1469 28 M1472 19.5 C1474.5 22.5 1474.5 27.5 1472 30.5 M1475.5 17.5 C1478.5 21.5 1478.5 28.5 1475.5 32.5"/>
  <path d="M1629 15 H1648.5 V29.5 H1637 L1633.5 33 V29.5 H1629 Z" fill="#ffffff"/>
 </g>
 <g fill="#1c1f24"><rect x="1632" y="18.5" width="12" height="1.3"/><rect x="1632" y="22" width="12" height="1.3"/><rect x="1632" y="25.5" width="12" height="1.3"/></g>
 <circle cx="1647.5" cy="34.5" r="10" fill="#1c1f24" stroke="#cfcfcf" stroke-width="1.2"/>
 <text x="1647.5" y="40" font-size="14" fill="#ffffff" text-anchor="middle" font-family="Liberation Sans">1</text>
 <ellipse cx="1405" cy="24" rx="8" ry="6" fill="#c8c8c8"/><circle cx="1400" cy="23.5" r="4.5" fill="#e0e0e0"/>
 <circle cx="1411" cy="28" r="6" fill="#2a8cd8" stroke="#1c1f24" stroke-width="1.2"/>
 <rect x="1410.3" y="26.5" width="1.4" height="4.5" fill="#fff"/><circle cx="1411" cy="24.8" r="0.8" fill="#fff"/>
 <rect x="1673" y="0" width="1" height="50" fill="#5a5d62"/>
</svg>
<div class="a" style="left:110px;top:1014px;font-size:18.5px;color:#d0d0d0">Buscar</div>
<div class="a" style="left:1492px;top:1016.5px;font-size:14.2px;color:#ffffff">ESP</div>
<div class="a" style="left:1539.5px;top:1005.5px;font-size:14.3px;color:#ffffff">3:04 p. m.</div>
<div class="a" style="left:1540px;top:1027px;font-size:15px;color:#ffffff">1/8/2025</div>

<svg class="a" style="left:1340px;top:940px;pointer-events:none" width="260" height="110">
 <path d="M72 28 L45 56 L85 96 L112 69" stroke="#6fbf4a" stroke-opacity="0.07" stroke-width="13" fill="none" stroke-linejoin="miter"/>
 <rect x="140" y="25" width="55" height="12" fill="#000" fill-opacity="0.05"/>
</svg>
</body></html>
